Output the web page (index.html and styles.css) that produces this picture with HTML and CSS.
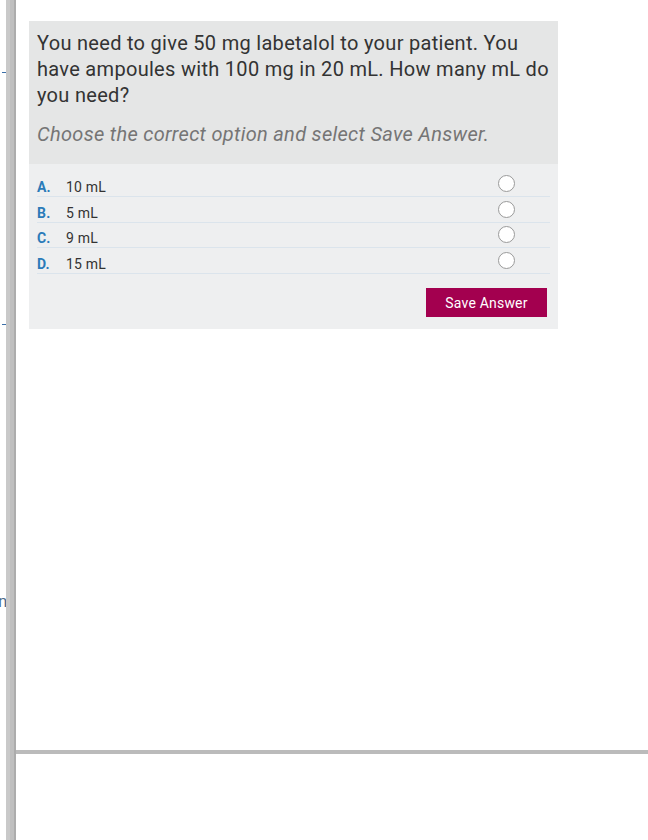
FILE: index.html
```html
<!DOCTYPE html>
<html lang="en">
<head>
<meta charset="utf-8">
<title>Question</title>
<link rel="stylesheet" href="styles.css">
</head>
<body>
<div class="gutter">
  <span class="dash dash-1"></span>
  <span class="dash dash-2"></span>
  <span class="cut-letter">n</span>
</div>
<div class="rail"></div>
<div class="main">
  <div class="content">
    <div class="card">
      <div class="stem">
        <p class="question">You need to give 50 mg labetalol to your patient. You have ampoules with 100 mg in 20 mL. How many mL do you need?</p>
        <p class="instruction">Choose the correct option and select Save Answer.</p>
      </div>
      <div class="answers">
        <ul class="options">
          <li class="option"><span class="letter">A.</span><span class="label">10 mL</span><span class="radio"></span></li>
          <li class="option"><span class="letter">B.</span><span class="label">5 mL</span><span class="radio"></span></li>
          <li class="option"><span class="letter">C.</span><span class="label">9 mL</span><span class="radio"></span></li>
          <li class="option"><span class="letter">D.</span><span class="label">15 mL</span><span class="radio"></span></li>
        </ul>
        <div class="actions">
          <button class="save">Save Answer</button>
        </div>
      </div>
    </div>
  </div>
  <div class="divider"></div>
  <div class="bottom"></div>
</div>
</body>
</html>
```

FILE: styles.css
```css
* { box-sizing: border-box; }
html, body { margin: 0; padding: 0; }
body {
  display: flex;
  height: 840px;
  overflow: hidden;
  background: #fff;
  font-family: Roboto, "Liberation Sans", Arial, sans-serif;
}
.gutter {
  width: 6px;
  display: flex;
  flex-direction: column;
  overflow: hidden;
}
.dash {
  display: block;
  width: 4px;
  height: 1px;
  margin-left: 2px;
  background: #3b6fa8;
}
.dash-1 { margin-top: 72px; }
.dash-2 { margin-top: 251px; }
.cut-letter {
  margin-top: 266px;
  margin-left: -2px;
  font-size: 17px;
  line-height: 20px;
  color: #4c6b8c;
}
.rail {
  width: 10px;
  background: linear-gradient(to right, #c9c9c9 0, #c9c9c9 4px, #bfbfbf 4px, #bfbfbf 8px, #acacac 8px);
}
.main {
  flex: 1;
  display: flex;
  flex-direction: column;
}
.content {
  height: 750px;
  padding: 21px 0 0 13px;
}
.divider {
  height: 4px;
  background: #bbbbbb;
}
.bottom { flex: 1; }
.card {
  width: 529px;
}
.stem {
  background: #e5e6e6;
  padding: 9px 8px 17px 8px;
}
.question {
  margin: 0;
  font-size: 20px;
  letter-spacing: 0.3px;
  line-height: 26px;
  color: #333;
}
.instruction {
  margin: 13px 0 0 0;
  font-size: 20px;
  letter-spacing: 0.3px;
  line-height: 26px;
  font-style: italic;
  color: #757575;
}
.answers {
  background: #eeeff0;
  padding: 7px 8px 12px 8px;
}
.options {
  list-style: none;
  margin: 0;
  padding: 0;
}
.option {
  display: flex;
  align-items: center;
  height: 25.8px;
  border-bottom: 1px solid #dbe4ec;
  font-size: 14px;
  letter-spacing: 0.2px;
  color: #333;
}
.letter {
  width: 29px;
  padding-top: 7px;
  font-weight: bold;
  color: #2b7bb9;
}
.label {
  flex: 1;
  padding-top: 7px;
}
.radio {
  width: 17px;
  height: 17px;
  margin-right: 35px;
  border: 1.5px solid #9a9a9a;
  border-radius: 50%;
  background: #fff;
}
.actions {
  display: flex;
  justify-content: flex-end;
  padding-top: 14px;
  padding-right: 3px;
}
.save {
  width: 121px;
  height: 29px;
  border: none;
  background: #a3004f;
  color: #fff;
  font-family: Roboto, "Liberation Sans", Arial, sans-serif;
  font-size: 14px;
  letter-spacing: 0.2px;
  padding: 0;
}
```
